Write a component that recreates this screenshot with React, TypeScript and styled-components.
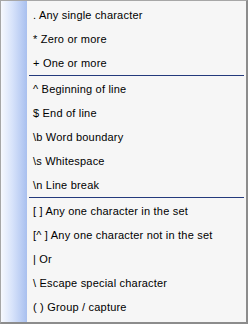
import React from 'react';
import styled, { createGlobalStyle } from 'styled-components';

const GlobalStyle = createGlobalStyle`
  html, body {
    margin: 0;
    padding: 0;
    background: #ffffff;
  }
`;

const Menu = styled.div`
  box-sizing: border-box;
  width: 248px;
  height: 324px;
  display: flex;
  background: #f6f6f6;
  border: 1px solid #a7a7a7;
  border-right: 2px solid #8c8c8c;
  border-bottom: 2px solid #8c8c8c;
  font-family: 'Liberation Sans', Arial, sans-serif;
  font-size: 11px;
  letter-spacing: 0.2px;
  color: #000000;
  overflow: hidden;
`;

const Gutter = styled.div`
  width: 26px;
  flex: none;
  background: linear-gradient(to right, #f7f9fe 0%, #d6e2fa 45%, #a9c0ef 100%);
`;

const Items = styled.div`
  flex: 1;
  display: flex;
  flex-direction: column;
  padding-top: 2px;
`;

const Item = styled.div`
  height: 24px;
  display: flex;
  align-items: center;
  padding-left: 6px;
  white-space: nowrap;
`;

const Separator = styled.div`
  height: 1px;
  margin: 0 2px 1px 2px;
  background: #243a7c;
`;

type Entry = string | null;

const entries: Entry[] = [
  '. Any single character',
  '* Zero or more',
  '+ One or more',
  null,
  '^ Beginning of line',
  '$ End of line',
  '\\b Word boundary',
  '\\s Whitespace',
  '\\n Line break',
  null,
  '[ ] Any one character in the set',
  '[^ ] Any one character not in the set',
  '| Or',
  '\\ Escape special character',
  '( ) Group / capture',
];

const App = () => {
  return (
    <>
      <GlobalStyle />
      <Menu>
        <Gutter />
        <Items>
          {entries.map((e, i) =>
            e === null ? <Separator key={i} /> : <Item key={i}>{e}</Item>
          )}
        </Items>
      </Menu>
    </>
  );
};

export default App;
